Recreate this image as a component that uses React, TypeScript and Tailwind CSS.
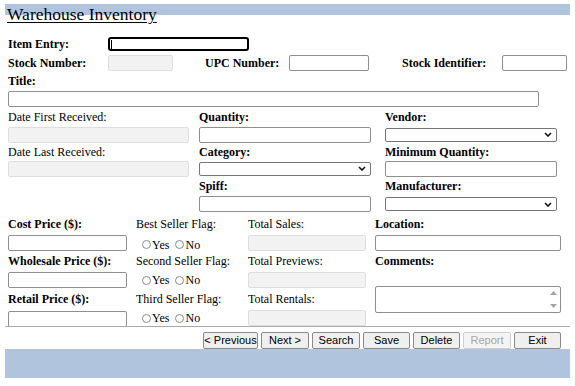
import React from "react";

const serif = "font-['Liberation_Serif','Times_New_Roman',serif]";
const inputCls = "h-[16px] border border-[#8f8f8f] rounded-[2px] bg-white";
const disabledCls = "h-[16px] border border-[#dedede] rounded-[2px] bg-[#f2f2f2]";

function Label({ text, bold = true, className = "" }: { text: string; bold?: boolean; className?: string }) {
  return (
    <div className={`flex items-center text-[12px] text-black whitespace-nowrap ${bold ? "font-bold" : ""} ${className}`}>
      {text}
    </div>
  );
}

function Select({ className = "" }: { className?: string }) {
  return (
    <div className={`h-[14px] border border-[#767676] rounded-[2px] bg-white flex items-center justify-end pr-[4px] ${className}`}>
      <svg width="8" height="5" viewBox="0 0 8 5">
        <polyline points="1,1 4,4 7,1" fill="none" stroke="#111" strokeWidth="1.6" />
      </svg>
    </div>
  );
}

function Radios() {
  return (
    <div className="flex items-center pl-[6px] text-[12px] text-black">
      <span className="w-[9px] h-[9px] rounded-full border border-[#8a8a8a] bg-white mr-[1px]" />
      <span>Yes</span>
      <span className="w-[9px] h-[9px] rounded-full border border-[#8a8a8a] bg-white ml-[6px] mr-[1px]" />
      <span>No</span>
    </div>
  );
}

function Button({ label, disabled = false, className = "" }: { label: string; disabled?: boolean; className?: string }) {
  return (
    <button
      className={`h-[17px] px-0 text-[11px] leading-none font-['Liberation_Sans',Arial,sans-serif] rounded-[2px] border ${
        disabled ? "border-[#cfcfcf] bg-[#f4f4f4] text-[#a6a6a6]" : "border-[#8a8a8a] bg-[#efefef] text-black"
      } ${className}`}
    >
      {label}
    </button>
  );
}

export default function App() {
  return (
    <div className={`w-[575px] h-[386px] bg-white px-[5px] pt-[4px] ${serif}`}>
      {/* Header */}
      <div className="h-[31px] bg-[linear-gradient(to_bottom,#b0c4de_11px,transparent_11px)]">
        <h1 className="pl-[2px] text-[17.5px] leading-[20px] underline decoration-1 underline-offset-[2px] text-black">
          Warehouse Inventory
        </h1>
      </div>

      {/* Form area */}
      <div className="h-[292px] overflow-hidden border-b border-[#ababab] pl-[3px]">
        <div className="h-[18px] flex items-center">
          <Label text="Item Entry:" className="w-[100px]" />
          <div className="w-[141px] h-[14px] border-2 border-black rounded-[3px] bg-white flex items-center pl-[1px]">
            <span className="w-[1px] h-[9px] bg-black" />
          </div>
        </div>
        <div className="h-[19px] flex items-center">
          <Label text="Stock Number:" className="w-[100px]" />
          <div className={`w-[65px] ${disabledCls}`} />
          <Label text="UPC Number:" className="w-[84px] ml-[32px]" />
          <div className={`w-[80px] ${inputCls}`} />
          <Label text="Stock Identifier:" className="w-[100px] ml-[33px]" />
          <div className={`w-[65px] ${inputCls}`} />
        </div>
        <Label text="Title:" className="h-[18px]" />
        <div className="h-[18px] flex items-center">
          <div className={`w-[531px] ${inputCls}`} />
        </div>

        {/* Three column block */}
        <div className="flex">
          <div className="w-[181px] flex flex-col">
            <Label text="Date First Received:" bold={false} className="h-[18px]" />
            <div className="h-[17px] flex items-center"><div className={`w-full ${disabledCls}`} /></div>
            <Label text="Date Last Received:" bold={false} className="h-[17px]" />
            <div className="h-[17px] flex items-center"><div className={`w-full ${disabledCls}`} /></div>
          </div>
          <div className="w-[172px] ml-[10px] flex flex-col">
            <Label text="Quantity:" className="h-[18px]" />
            <div className="h-[17px] flex items-center"><div className={`w-full ${inputCls}`} /></div>
            <Label text="Category:" className="h-[17px]" />
            <div className="h-[17px] flex items-center"><Select className="w-full" /></div>
            <Label text="Spiff:" className="h-[18px]" />
            <div className="h-[18px] flex items-center"><div className={`w-full ${inputCls}`} /></div>
          </div>
          <div className="w-[172px] ml-[14px] flex flex-col">
            <Label text="Vendor:" className="h-[18px]" />
            <div className="h-[17px] flex items-center"><Select className="w-full" /></div>
            <Label text="Minimum Quantity:" className="h-[17px]" />
            <div className="h-[17px] flex items-center"><div className={`w-full ${inputCls}`} /></div>
            <Label text="Manufacturer:" className="h-[18px]" />
            <div className="h-[18px] flex items-center"><Select className="w-full" /></div>
          </div>
        </div>

        {/* Four column block */}
        <div className="flex">
          <div className="w-[119px] flex flex-col">
            <Label text="Cost Price ($):" className="h-[21px]" />
            <div className="h-[18px] flex items-center"><div className={`w-full ${inputCls}`} /></div>
            <Label text="Wholesale Price ($):" className="h-[18px]" />
            <div className="h-[20px] flex items-center"><div className={`w-full ${inputCls}`} /></div>
            <Label text="Retail Price ($):" className="h-[17px]" />
            <div className="h-[20px] pt-[4px]"><div className={`w-full ${inputCls}`} /></div>
          </div>
          <div className="w-[112px] ml-[9px] flex flex-col">
            <Label text="Best Seller Flag:" bold={false} className="h-[21px]" />
            <div className="h-[18px] flex items-center pt-[3px]"><Radios /></div>
            <Label text="Second Seller Flag:" bold={false} className="h-[18px]" />
            <div className="h-[20px] flex items-center"><Radios /></div>
            <Label text="Third Seller Flag:" bold={false} className="h-[17px]" />
            <div className="h-[20px] flex items-center pt-[2px]"><Radios /></div>
          </div>
          <div className="w-[118px] flex flex-col">
            <Label text="Total Sales:" bold={false} className="h-[21px]" />
            <div className="h-[18px] flex items-center"><div className={`w-full ${disabledCls}`} /></div>
            <Label text="Total Previews:" bold={false} className="h-[18px]" />
            <div className="h-[20px] flex items-center"><div className={`w-full ${disabledCls}`} /></div>
            <Label text="Total Rentals:" bold={false} className="h-[17px]" />
            <div className="h-[20px] pt-[3px]"><div className={`w-full ${disabledCls}`} /></div>
          </div>
          <div className="w-[186px] ml-[9px] flex flex-col">
            <Label text="Location:" className="h-[21px]" />
            <div className="h-[18px] flex items-center"><div className={`w-full ${inputCls}`} /></div>
            <Label text="Comments:" className="h-[18px]" />
            <div className="mt-[16px] h-[27px] w-full border border-[#8f8f8f] rounded-[2px] bg-white flex flex-col items-end justify-between py-[4px] pr-[3px]">
              <svg width="7" height="4" viewBox="0 0 7 4"><polygon points="0,4 3.5,0 7,4" fill="#a3a3a3" /></svg>
              <svg width="7" height="4" viewBox="0 0 7 4"><polygon points="0,0 3.5,4 7,0" fill="#a3a3a3" /></svg>
            </div>
          </div>
        </div>
      </div>

      {/* Buttons */}
      <div className="mt-[5px] flex justify-end gap-[3px] pr-[9px]">
        <Button label="< Previous" className="w-[55px]" />
        <Button label="Next >" className="w-[48px]" />
        <Button label="Search" className="w-[48px]" />
        <Button label="Save" className="w-[47px]" />
        <Button label="Delete" className="w-[47px]" />
        <Button label="Report" disabled className="w-[48px]" />
        <Button label="Exit" className="w-[47px]" />
      </div>

      {/* Footer bar */}
      <div className="h-[29px] bg-[#b0c4de]" />
    </div>
  );
}
